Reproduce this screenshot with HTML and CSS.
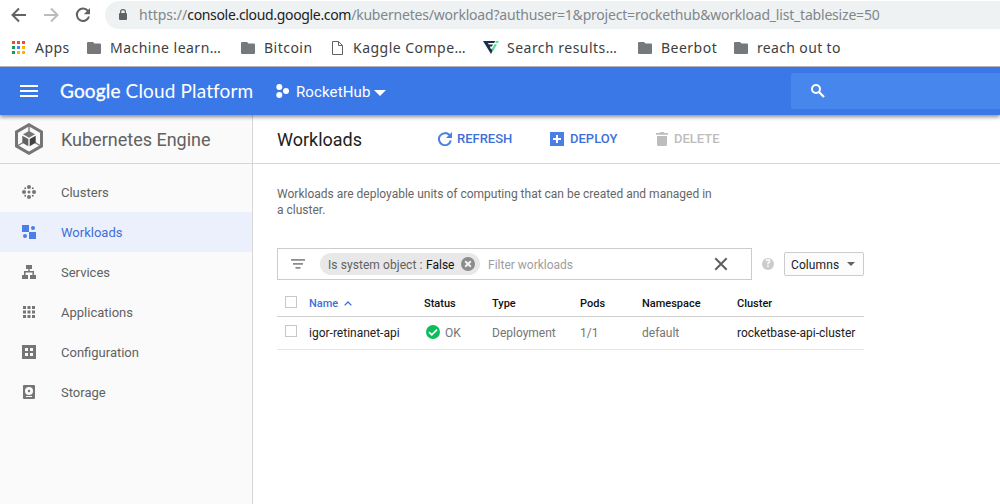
FILE: index.html
```html
<!DOCTYPE html>
<html lang="en">
<head>
<meta charset="utf-8">
<title>Workloads</title>
<link rel="stylesheet" href="styles.css">
</head>
<body>
<div class="browser">
  <div class="toolbar">
    <svg class="nav-icon" width="16" height="16" viewBox="0 0 16 16"><path class="line dark" d="M15 8H2M8 1.500L1.500 8L8 14.500"/></svg>
    <svg class="nav-icon" width="16" height="16" viewBox="0 0 16 16"><path class="line pale" d="M1 8h13M8 1.500L14.500 8L8 14.500"/></svg>
    <svg class="nav-icon" width="16" height="16" viewBox="0 0 16 16"><path class="line dark" d="M13.200 4.200A6.200 6.200 0 1 0 14 9.500"/><path fill="#5f6368" d="M15 1v6.200H8.800z"/></svg>
    <div class="address">
      <svg class="lock" width="8" height="12" viewBox="0 0 8 12"><path fill="#5f6368" fill-rule="evenodd" d="M0 5Q0 4 1 4V3a3 3 0 0 1 6 0v1q1 0 1 1v5q0 1-1 1H1q-1 0-1-1zM2.200 4h3.600V3a1.800 1.800 0 0 0-3.600 0z"/></svg>
      <span class="url"><span class="scheme">https://</span><span class="host">console.cloud.google.com</span><span class="path">/kubernetes/workload?authuser=1&amp;project=rockethub&amp;workload_list_tablesize=50</span></span>
    </div>
  </div>
  <div class="bookmarks">
    <div class="bookmark bm-apps"><svg width="13" height="13" viewBox="0 0 13 13"><path fill="#f04a2f" d="M0 0h3v3H0zM5 0h3v3H5zM10 0h3v3h-3z"/><path fill="#129e5b" d="M0 5h3v3H0zM0 10h3v3H0z"/><path fill="#4285f4" d="M5 5h3v3H5z"/><path fill="#fbb30b" d="M10 5h3v3h-3zM5 10h3v3H5zM10 10h3v3h-3z"/></svg><span>Apps</span></div>
    <div class="bookmark bm-machine"><svg width="14" height="12" viewBox="0 0 14 12"><path class="folder" d="M1 0h5l1.500 1.500H13q1 0 1 1V11q0 1-1 1H1q-1 0-1-1V1q0-1 1-1z"/></svg><span>Machine learn…</span></div>
    <div class="bookmark bm-bitcoin"><svg width="14" height="12" viewBox="0 0 14 12"><path class="folder" d="M1 0h5l1.500 1.500H13q1 0 1 1V11q0 1-1 1H1q-1 0-1-1V1q0-1 1-1z"/></svg><span>Bitcoin</span></div>
    <div class="bookmark bm-kaggle"><svg width="11" height="14" viewBox="0 0 11 14"><path fill="none" stroke="#5f6368" d="M.5.5h6l4 4v9H.5zM6.500.5v4h4"/></svg><span>Kaggle Compe…</span></div>
    <div class="bookmark bm-search"><svg width="16" height="13" viewBox="0 0 16 13"><path fill="#18304a" d="M0 0h12.500l-1.500 2H5l.8 1.600H10L8.900 5.600H6.800l1.300 3L9.500 7v3L8 13z"/><path fill="#4be287" d="M13.500 0H16l-1.300 2h-2.400zM11.500 3.200H14L9.500 11V7z"/></svg><span>Search results…</span></div>
    <div class="bookmark bm-beer"><svg width="14" height="12" viewBox="0 0 14 12"><path class="folder" d="M1 0h5l1.500 1.500H13q1 0 1 1V11q0 1-1 1H1q-1 0-1-1V1q0-1 1-1z"/></svg><span>Beerbot</span></div>
    <div class="bookmark bm-reach"><svg width="14" height="12" viewBox="0 0 14 12"><path class="folder" d="M1 0h5l1.500 1.500H13q1 0 1 1V11q0 1-1 1H1q-1 0-1-1V1q0-1 1-1z"/></svg><span>reach out to</span></div>
  </div>
</div>
<header class="topbar">
  <svg class="menu" width="18" height="12" viewBox="0 0 18 12"><path fill="#fff" d="M0 0h18v2H0zM0 5h18v2H0zM0 10h18v2H0z"/></svg>
  <div class="brand"><span class="brand-google">Google</span> Cloud Platform</div>
  <svg class="project-icon" width="13" height="14" viewBox="0 0 13 14"><g fill="#fff"><circle cx="3.300" cy="3" r="3"/><circle cx="3.300" cy="11" r="3"/><circle cx="10" cy="7" r="3"/></g></svg>
  <span class="project">RocketHub</span>
  <svg class="project-caret" width="12" height="6" viewBox="0 0 12 6"><path fill="#fff" d="M0 0h12L6 6z"/></svg>
  <div class="search"><svg width="15" height="15" viewBox="0 0 15 15"><circle cx="5" cy="5" r="4" fill="none" stroke="#fff" stroke-width="2"/><path d="M8 8L13 13" stroke="#fff" stroke-width="2.200"/></svg></div>
</header>
<div class="layout">
  <aside class="sidebar">
    <div class="product">
      <svg width="28" height="32" viewBox="0 0 28 32"><path fill="none" stroke="#757575" stroke-width="3" d="M14 1.700L26.500 8.900V23.100L14 30.300L1.500 23.100V8.900z"/><path fill="none" stroke="#757575" stroke-width="1.300" d="M14 3v7M3 22.500l6-3.500M25 22.500L19 19"/><path fill="#757575" d="M14 8l6 3.300-6 3.400-6-3.400z"/><path fill="#616161" d="M7.300 12.800l6 3.300v7.200l-6-3.500z"/><path fill="#424242" d="M20.700 12.800l-6 3.300v7.200l6-3.500z"/></svg>
      <span>Kubernetes Engine</span>
    </div>
    <nav class="menu-list">
      <div class="item"><svg width="14" height="14" viewBox="0 0 14 14"><circle cx="7" cy="2" r="2"/><circle cx="7" cy="12" r="2"/><circle cx="2" cy="7" r="2"/><circle cx="12" cy="7" r="2"/><circle cx="7" cy="7" r="1.500"/><circle cx="3.200" cy="3.200" r="1"/><circle cx="10.800" cy="3.200" r="1"/><circle cx="3.200" cy="10.800" r="1"/><circle cx="10.800" cy="10.800" r="1"/></svg><span>Clusters</span></div>
      <div class="item active"><svg width="14" height="14" viewBox="0 0 14 14"><path d="M0 0h7v7H0zM7 7h7v7H7z"/><circle cx="11" cy="3" r="2"/><circle cx="3" cy="11" r="2"/></svg><span>Workloads</span></div>
      <div class="item"><svg width="14" height="14" viewBox="0 0 14 14"><path d="M4 0h6v4H7.700v2H12v4h2v4H8v-4h2.500V7.400h-7V10H6v4H0v-4h2V6h4.300V4H4z"/></svg><span>Services</span></div>
      <div class="item"><svg width="14" height="14" viewBox="0 0 14 14"><path d="M1 1h3v3H1zM5.500 1h3v3h-3zM10 1h3v3h-3zM1 5.500h3v3H1zM5.500 5.500h3v3h-3zM10 5.500h3v3h-3zM1 10h3v3H1zM5.500 10h3v3h-3zM10 10h3v3h-3z"/></svg><span>Applications</span></div>
      <div class="item"><svg width="14" height="14" viewBox="0 0 14 14"><path fill-rule="evenodd" d="M0 0h14v14H0zM3 3v3h3V3zM8 3v3h3V3zM3 8v3h3V8zM8 8v3h3V8z"/></svg><span>Configuration</span></div>
      <div class="item"><svg width="14" height="14" viewBox="0 0 14 14"><rect x="1" width="12" height="14" rx="1"/><circle cx="7" cy="6" r="4" fill="#fafafa"/><circle cx="7" cy="6" r="1.200"/><path fill="#fafafa" d="M4 11h6v1H4z"/></svg><span>Storage</span></div>
    </nav>
  </aside>
  <main class="content">
    <div class="actionbar">
      <h1 class="title">Workloads</h1>
      <div class="action refresh"><svg width="14" height="14" viewBox="0 0 14 14"><path fill="none" stroke="#4a7fe6" stroke-width="2" d="M11.500 3.200A6 6 0 1 0 12.800 8.500"/><path fill="#4a7fe6" d="M14 0v6H8z"/></svg><span>REFRESH</span></div>
      <div class="action deploy"><svg width="14" height="14" viewBox="0 0 14 14"><path fill="#4a7fe6" fill-rule="evenodd" d="M0 0h14v14H0zM6 3v3H3v2h3v3h2V8h3V6H8V3z"/></svg><span>DEPLOY</span></div>
      <div class="action delete"><svg width="12" height="14" viewBox="0 0 12 14"><path fill="#bdbdbd" d="M0 1h3.500l1-1h3l1 1H12v1.800H0zM1 4h10v8.500q0 1.500-1.500 1.500h-7Q1 14 1 12.500z"/></svg><span>DELETE</span></div>
    </div>
    <p class="intro">Workloads are deployable units of computing that can be created and managed in<br>a cluster.</p>
    <div class="controls">
      <div class="filter">
        <svg width="14" height="10" viewBox="0 0 14 10"><path fill="#8c8c8c" d="M0 0h14v1.800H0zM2 4h10v1.800H2zM4.500 8h5v1.800h-5z"/></svg>
        <div class="chip"><span class="chip-key">Is system object :</span><span class="chip-value">False</span><svg width="14" height="14" viewBox="0 0 14 14"><circle cx="7" cy="7" r="7" fill="#8c8c8c"/><path stroke="#f2f2f2" stroke-width="2" d="M4.200 4.200l5.600 5.600M9.800 4.200L4.200 9.800"/></svg></div>
        <span class="placeholder">Filter workloads</span>
        <svg class="clear" width="14" height="14" viewBox="0 0 14 14"><path stroke="#5f5f5f" stroke-width="2" d="M1.300 1.300l11.400 11.400M12.700 1.300L1.300 12.700"/></svg>
      </div>
      <span class="help">?</span>
      <div class="columns"><span>Columns</span><svg width="8" height="4" viewBox="0 0 8 4"><path fill="#616161" d="M0 0h8L4 4z"/></svg></div>
    </div>
    <div class="table">
      <div class="row head">
        <span class="check"></span>
        <span class="sorted">Name<svg width="8" height="5" viewBox="0 0 8 5"><path fill="none" stroke="#3f6fd8" stroke-width="1.300" d="M.6 4.400L4 1l3.400 3.400"/></svg></span>
        <span class="h-status">Status</span><span class="h-type">Type</span><span class="h-pods">Pods</span><span class="h-ns">Namespace</span><span class="h-cluster">Cluster</span>
      </div>
      <div class="row data">
        <span class="check"></span>
        <span class="link name">igor-retinanet-api</span>
        <span class="status"><svg width="14" height="14" viewBox="0 0 14 14"><circle cx="7" cy="7" r="7" fill="#0abf5b"/><path fill="none" stroke="#fff" stroke-width="1.700" d="M3 7.200l2.800 2.700L11 4.700"/></svg>OK</span>
        <span class="type">Deployment</span><span class="pods">1/1</span><span class="ns">default</span><span class="link cluster">rocketbase-api-cluster</span>
      </div>
    </div>
  </main>
</div>
</body>
</html>
```
FILE: styles.css
```css
* { box-sizing: border-box; }
body {
  margin: 0;
  width: 1000px;
  height: 504px;
  overflow: hidden;
  display: flex;
  flex-direction: column;
  background: #fff;
  font-family: Roboto, sans-serif;
  white-space: nowrap;
}
svg { display: block; flex: none; }

.browser { height: 67px; border-bottom: 1px solid #b3b3b3; font-family: "Noto Sans", sans-serif; }
.toolbar { display: flex; align-items: center; height: 30px; padding-left: 11px; }
.nav-icon { margin-right: 16px; }
.line { fill: none; stroke-width: 2; }
.dark { stroke: #5f6368; }
.pale { stroke: #babcbe; }
.address {
  flex: 1;
  display: flex;
  align-items: center;
  height: 28px;
  margin-left: -2px;
  padding-left: 14px;
  border-radius: 14px 0 0 14px;
  background: #eff2f3;
}
.url { margin-left: 12px; padding-bottom: 1px; font-size: 14px; color: #80868b; }
.host { letter-spacing: -.33px; color: #202124; }
.path { letter-spacing: -.2px; }
.bookmarks { display: flex; height: 35px; padding-left: 12px; font-size: 14px; letter-spacing: .48px; color: #3c4043; }
.bookmark { display: flex; align-items: center; gap: 9px; }
.folder { fill: #75797c; }
.bm-apps { width: 75px; gap: 10px; }
.bm-machine { width: 154px; }
.bm-bitcoin { width: 91px; }
.bm-kaggle { width: 151px; gap: 10px; }
.bm-search { width: 155px; gap: 8px; }
.bm-beer { width: 96px; }
.bm-reach { letter-spacing: .35px; }

.topbar {
  z-index: 1;
  flex: none;
  display: flex;
  align-items: center;
  height: 48px;
  padding-left: 20px;
  background: #3b78e7;
  box-shadow: 0 2px 4px rgba(0, 0, 0, .45);
  clip-path: inset(0 0 -8px 0);
  color: #fff;
}
.brand { width: 216px; margin-left: 22px; font: 19px/24px Lato, sans-serif; letter-spacing: .15px; }
.brand-google { -webkit-text-stroke: .3px #fff; }
.project { width: 76px; margin-left: 7px; padding-top: 2px; font-size: 15px; letter-spacing: .12px; }
.project-caret { margin: 3px 0 0 2px; }
.search {
  flex: 1;
  height: 36px;
  margin-left: 405px;
  padding: 11px 0 0 20px;
  border-radius: 2px 0 0 2px;
  background: #4787ed;
}

.layout { flex: 1; display: flex; }
.sidebar { width: 253px; border-right: 1px solid #d6d6d6; background: #fafafa; color: #616161; }
.product {
  display: flex;
  align-items: center;
  gap: 18px;
  height: 49px;
  padding-left: 15px;
  border-bottom: 1px solid #d6d6d6;
  font-size: 18px;
}
.menu-list { padding-top: 8px; }
.item { display: flex; align-items: center; gap: 25px; height: 40px; padding-left: 22px; font-size: 13px; }
.item svg { fill: #757575; }
.active { background: #ebf0fc; color: #3f6fd8; }
.active svg { fill: #4a7fe6; }

.content { flex: 1; }
.actionbar { display: flex; align-items: center; height: 49px; padding-left: 24px; border-bottom: 1px solid #d6d6d6; }
.title { width: 161px; margin: 0; font-size: 18px; font-weight: 400; color: #212121; }
.action { display: flex; align-items: center; gap: 5px; font-size: 13px; font-weight: 500; color: #3f6fd8; }
.action span { padding-bottom: 2px; }
.refresh { width: 112px; }
.deploy { width: 106px; gap: 6px; }
.delete { gap: 6px; color: #bdbdbd; }
.intro { margin: 22px 0 0 24px; font-size: 12px; line-height: 16px; color: #666; }
.controls { display: flex; align-items: center; height: 32px; margin: 30px 0 0 24px; }
.filter { display: flex; align-items: center; width: 475px; height: 32px; padding-left: 13px; border: 1px solid #ccc; font-size: 12px; }
.filter span { padding-top: 1px; }
.chip { display: flex; align-items: center; width: 160px; height: 22px; margin-left: 15px; padding-left: 8px; border-radius: 11px; background: #e8e8e8; }
.chip-key { width: 98px; letter-spacing: .07px; color: #616161; }
.chip-value { width: 35px; color: #111; }
.placeholder { width: 226px; margin-left: 8px; color: #9e9e9e; }
.help { width: 12px; height: 12px; margin-left: 10px; border-radius: 6px; background: #ccc; color: #fff; font: bold 10px/12px Roboto, sans-serif; text-align: center; }
.columns {
  display: flex;
  align-items: center;
  justify-content: space-between;
  width: 80px;
  height: 24px;
  margin-left: 10px;
  padding: 0 8px 0 6px;
  border: 1px solid #ccc;
  border-radius: 2px;
  background: #fcfcfc;
  color: #212121;
  font-size: 12px;
  letter-spacing: .1px;
}
.columns span { padding-top: 1px; }
.table { width: 587px; margin: 9px 0 0 24px; font-size: 12px; }
.row { display: grid; grid-template-columns: 32px 115px 68px 88px 62px 95px 127px; align-items: center; }
.head { height: 28px; padding-top: 2px; border-bottom: 1px solid #d0d0d0; font-size: 11px; font-weight: 500; color: #111; }
.data { height: 33px; border-bottom: 1px solid #e4e4e4; color: #757575; }
.check { width: 12px; height: 12px; margin: -4px 0 0 8px; border: 1px solid #c8c8c8; }
.sorted { display: flex; align-items: center; gap: 6px; color: #3f6fd8; }
.status { display: flex; align-items: center; gap: 5px; padding-left: 2px; }
.status svg { margin-top: -2px; }
.link { color: #212121; }
```
